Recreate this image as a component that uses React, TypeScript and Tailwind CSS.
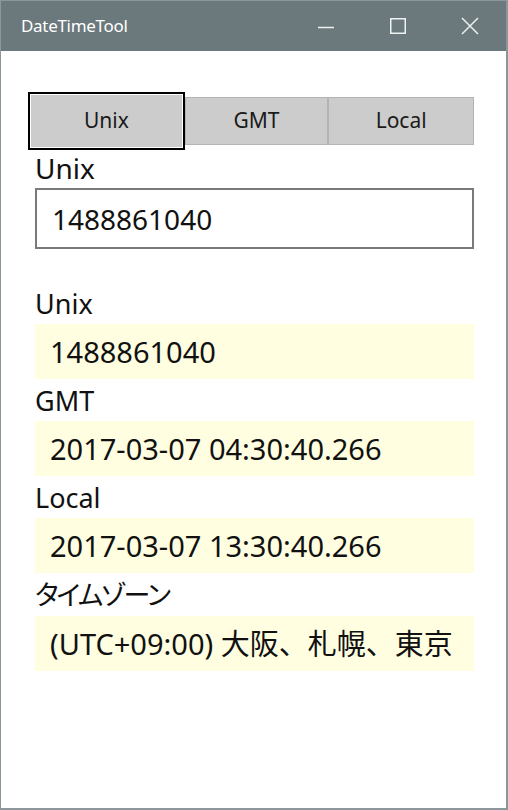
const font = { fontFamily: '"Noto Sans", "Noto Sans CJK JP", sans-serif' }

const fields = [
  { label: 'Unix', value: '1488861040' },
  { label: 'GMT', value: '2017-03-07 04:30:40.266' },
  { label: 'Local', value: '2017-03-07 13:30:40.266' },
  { label: 'タイムゾーン', value: '(UTC+09:00) 大阪、札幌、東京', jp: true },
]

function TitleBar() {
  return (
    <div className="flex h-[50px] items-center bg-[#6b797c] pl-[20px] text-white">
      <span className="flex-1 text-[17px] tracking-[-0.3px]">DateTimeTool</span>
      <div className="flex h-full items-center">
        <div className="flex w-[72px] justify-center">
          <svg width="16" height="16" viewBox="0 0 16 16">
            <path d="M0 9.5h16" stroke="#eef1f1" strokeWidth="1.5" />
          </svg>
        </div>
        <div className="flex w-[72px] justify-center">
          <svg width="18" height="18" viewBox="0 0 18 18">
            <rect x="1.75" y="1.75" width="14.5" height="14.5" fill="none" stroke="#eef1f1" strokeWidth="1.5" />
          </svg>
        </div>
        <div className="flex w-[72px] justify-center">
          <svg width="18" height="18" viewBox="0 0 18 18">
            <path d="M1 1l16 16M17 1L1 17" stroke="#eef1f1" strokeWidth="1.5" />
          </svg>
        </div>
      </div>
    </div>
  )
}

export default function App() {
  return (
    <div className="h-[810px] w-[508px] overflow-hidden border border-[#8d979b] border-r-2 border-b-2 bg-white" style={font}>
      <TitleBar />
      <div className="flex flex-col pl-[33px] pr-[32px] pt-[41px]">
        <div className="-ml-[6px] flex h-[58px] text-[21px] text-[#1a1a1a]">
          <button className="w-[157px] border-2 border-black">
            <div className="flex h-full items-center justify-center border border-white bg-[#cccccc]">Unix</div>
          </button>
          <button className="flex h-[48px] w-[144px] items-center justify-center self-center border border-[#b4b4b4] bg-[#cccccc]">GMT</button>
          <button className="flex h-[48px] w-[146px] items-center justify-center self-center border border-[#b4b4b4] bg-[#cccccc]">Local</button>
        </div>
        <div className="ml-[1px] mt-[1px] h-[34px] text-[28px] leading-[34px] text-[#111]">Unix</div>
        <div className="ml-[1px] mt-[3px] flex h-[61px] items-center border-2 border-[#7a7a7a] pl-[15px] text-[28px] text-[#111]">
          1488861040
        </div>
        <div className="ml-[1px] mt-[38px] flex flex-col">
          {fields.map((f) => (
            <div key={f.label} className="flex flex-col">
              <div
                className={
                  f.jp
                    ? "h-[38px] text-[27px] leading-[34px] tracking-[-2px] text-[#111] [font-feature-settings:'palt']"
                    : 'h-[37px] text-[27px] leading-[34px] text-[#111]'
                }
              >
                {f.label}
              </div>
              <div className="mb-[5px] flex h-[55px] items-center bg-[#fffee0] pl-[15px] text-[29px] text-[#111]">
                {f.value}
              </div>
            </div>
          ))}
        </div>
      </div>
    </div>
  )
}
